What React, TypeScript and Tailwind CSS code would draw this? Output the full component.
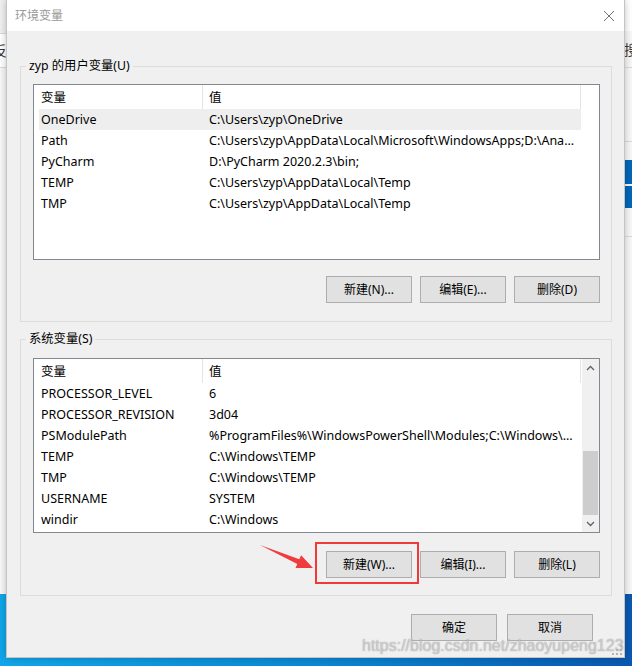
import React from 'react';

type EnvVar = { name: string; value: string };

const userVars: EnvVar[] = [
  { name: 'OneDrive', value: 'C:\\Users\\zyp\\OneDrive' },
  { name: 'Path', value: 'C:\\Users\\zyp\\AppData\\Local\\Microsoft\\WindowsApps;D:\\Ana...' },
  { name: 'PyCharm', value: 'D:\\PyCharm 2020.2.3\\bin;' },
  { name: 'TEMP', value: 'C:\\Users\\zyp\\AppData\\Local\\Temp' },
  { name: 'TMP', value: 'C:\\Users\\zyp\\AppData\\Local\\Temp' },
];

const systemVars: EnvVar[] = [
  { name: 'PROCESSOR_LEVEL', value: '6' },
  { name: 'PROCESSOR_REVISION', value: '3d04' },
  { name: 'PSModulePath', value: '%ProgramFiles%\\WindowsPowerShell\\Modules;C:\\Windows\\...' },
  { name: 'TEMP', value: 'C:\\Windows\\TEMP' },
  { name: 'TMP', value: 'C:\\Windows\\TEMP' },
  { name: 'USERNAME', value: 'SYSTEM' },
  { name: 'windir', value: 'C:\\Windows' },
];

const WinButton: React.FC<{ children: React.ReactNode }> = ({ children }) => (
  <button className="flex h-[27px] w-[86px] items-center justify-center border border-[#adadad] bg-[#e1e1e1] text-[12px] leading-none text-black">
    {children}
  </button>
);

const Chevron: React.FC<{ down?: boolean }> = ({ down }) => (
  <svg width="9" height="6" viewBox="0 0 9 6" className={down ? 'rotate-180' : ''}>
    <path d="M1 5 L4.5 1.5 L8 5" fill="none" stroke="#606060" strokeWidth="1.3" />
  </svg>
);

const ScrollBar: React.FC = () => (
  <div className="flex w-[17px] flex-col bg-[#f0f0f0]">
    <div className="flex h-[17px] items-center justify-center">
      <Chevron />
    </div>
    <div className="flex flex-1 flex-col justify-end">
      <div className="mx-[1px] h-[64px] bg-[#cdcdcd]" />
    </div>
    <div className="flex h-[17px] items-center justify-center">
      <Chevron down />
    </div>
  </div>
);

const VarList: React.FC<{ rows: EnvVar[]; selected?: number; scroll?: boolean; className: string }> = ({
  rows,
  selected,
  scroll,
  className,
}) => (
  <div className={`flex border border-[#828790] bg-white text-[12.5px] ${className}`}>
    <div className="min-w-0 flex-1 pl-[5px]">
      <div className="flex h-[24px] w-[542px]">
        <div className="flex w-[163px] items-center pl-[2px] pt-[2px]">变量</div>
        <div className="flex w-[379px] items-center border-x border-[#e5e5e5] pl-[6px] pt-[2px]">值</div>
      </div>
      {rows.map((row, i) => (
        <div
          key={row.name + i}
          className={`flex h-[21px] w-[542px] items-center whitespace-nowrap pt-[2px] ${i === selected ? 'bg-[#eeeeee]' : ''}`}
        >
          <div className="w-[163px] pl-[2px]">{row.name}</div>
          <div className="w-[379px] overflow-hidden pl-[7px]">{row.value}</div>
        </div>
      ))}
    </div>
    {scroll && <ScrollBar />}
  </div>
);

const RedArrow: React.FC = () => (
  <svg width="70" height="40" viewBox="0 0 70 40" className="pointer-events-none absolute -left-[75px] -top-[16px]">
    <path d="M9 10 L48.3 24.3 L50.1 20.2 L62 33 L44.5 33 L46.3 28.9 Z" fill="#f03c3c" />
  </svg>
);

const ResizeGrip: React.FC = () => (
  <svg width="10" height="10" viewBox="0 0 10 10" className="absolute bottom-[2px] right-[2px]">
    {[
      [8, 0],
      [4, 4],
      [8, 4],
      [0, 8],
      [4, 8],
      [8, 8],
    ].map(([x, y]) => (
      <rect key={`${x}-${y}`} x={x} y={y} width="2" height="2" fill="#b4b4b4" />
    ))}
  </svg>
);

const App: React.FC = () => {
  return (
    <div className="relative h-[666px] w-[632px] overflow-hidden font-['Noto_Sans','Noto_Sans_CJK_SC',sans-serif] text-[12px] text-black">
      {/* window behind the dialog + desktop */}
      <div className="flex h-full flex-col">
        <div className="flex h-[594px] justify-between bg-[#f7f7f7]">
          <div className="flex w-[7px] flex-col overflow-hidden">
            <div className="h-[34px] border-b border-[#dadada] bg-[#f0f0f0]" />
            <div className="flex h-[34px] items-center border-b border-[#dadada] bg-white">
              <span className="-ml-[7px] font-['Noto_Sans_CJK_SC',sans-serif] text-[14px] text-[#333]">反</span>
            </div>
          </div>
          <div className="flex w-[8px] flex-col overflow-hidden">
            <div className="h-[31px] bg-white" />
            <div className="flex h-[37px] items-center border-b border-[#dadada]">
              <span className="font-['Noto_Sans_CJK_SC',sans-serif] text-[14px] text-[#333]">搜</span>
            </div>
            <div className="h-[74px] border-b border-[#dadada]" />
            <div className="mt-[18px] h-[24px] bg-[#0067b8]" />
            <div className="mt-[2px] h-[22px] bg-[#0067b8]" />
            <div className="h-[29px] border-b border-[#dadada]" />
          </div>
        </div>
        <div className="flex-1 bg-linear-to-r from-[#11a6ea] via-[#0b88d6] to-[#0a58b0]" />
      </div>

      {/* dialog */}
      <div className="absolute left-[7px] top-0 flex h-[657px] w-[617px] flex-col bg-[#f0f0f0] shadow-[0_0_8px_rgba(0,0,0,0.3)] ring-1 ring-[#c4c4c4]">
        <div className="flex h-[31px] items-center justify-between bg-white pl-[8px] pr-[10px]">
          <span className="text-[12px] text-[#999999]">环境变量</span>
          <svg width="10" height="10" viewBox="0 0 10 10">
            <path d="M0 0 L10 10 M10 0 L0 10" stroke="#707070" strokeWidth="1" />
          </svg>
        </div>

        <div className="flex flex-1 flex-col pl-[13px] pr-[12px] pt-[27px]">
          <fieldset className="border border-[#dcdcdc]">
            <legend className="ml-[5px] px-[3px] text-[12.3px] leading-[16px]">zyp 的用户变量(U)</legend>
            <div className="pb-[18px] pl-[12px] pr-[11px] pt-[10px]">
              <VarList rows={userVars} selected={0} className="h-[176px]" />
              <div className="mt-[16px] flex justify-end gap-[8px]">
                <WinButton>新建(N)...</WinButton>
                <WinButton>编辑(E)...</WinButton>
                <WinButton>删除(D)</WinButton>
              </div>
            </div>
          </fieldset>

          <fieldset className="mt-[9px] border border-[#dcdcdc]">
            <legend className="ml-[5px] px-[3px] text-[12.3px] leading-[16px]">系统变量(S)</legend>
            <div className="pb-[17px] pl-[12px] pr-[11px] pt-[11px]">
              <VarList rows={systemVars} scroll className="h-[175px]" />
              <div className="mt-[18px] flex justify-end gap-[8px]">
                <div className="relative">
                  <WinButton>新建(W)...</WinButton>
                  <div className="pointer-events-none absolute -bottom-[6px] -left-[11px] -right-[7px] -top-[9px] border-[2px] border-[#f03a3a]" />
                  <RedArrow />
                </div>
                <WinButton>编辑(I)...</WinButton>
                <WinButton>删除(L)</WinButton>
              </div>
            </div>
          </fieldset>

          <div className="mt-[18px] flex justify-end gap-[10px] pr-[19px]">
            <WinButton>确定</WinButton>
            <WinButton>取消</WinButton>
          </div>
        </div>

        <span className="pointer-events-none absolute left-[355px] top-[637px] whitespace-nowrap font-['Liberation_Sans',sans-serif] text-[16px] leading-[18px] text-[rgba(255,255,255,0.55)] [text-shadow:0_0_1px_rgba(110,110,110,0.9)]">
          https://blog.csdn.net/zhaoyupeng123
        </span>
        <ResizeGrip />
      </div>
    </div>
  );
};

export default App;
